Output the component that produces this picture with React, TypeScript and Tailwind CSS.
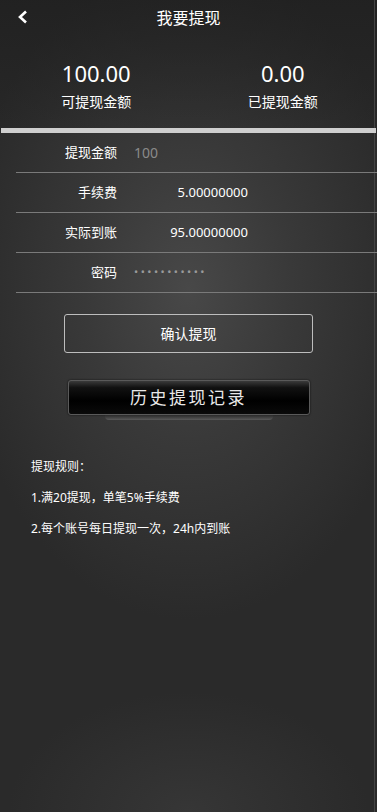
import React from "react";

export default function App() {
  const font = { fontFamily: '"Noto Sans", "Noto Sans CJK SC", sans-serif' };
  return (
    <div
      className="relative w-[377px] h-[812px] overflow-hidden text-white bg-[#2a2a2a]"
      style={font}
    >
      <div className="absolute inset-0 bg-[radial-gradient(ellipse_230px_330px_at_50%_290px,#484848_0%,#393939_45%,rgba(42,42,42,0)_100%)]" />
      <div className="absolute inset-x-0 top-0 h-[130px] bg-[linear-gradient(to_bottom,rgba(30,30,30,0.7),rgba(30,30,30,0.2))]" />
      <div className="absolute inset-x-0 bottom-0 h-[200px] bg-[radial-gradient(ellipse_180px_120px_at_50%_100%,#363636_0%,rgba(42,42,42,0)_100%)]" />
      <div className="absolute top-0 bottom-0 right-[2px] w-px bg-[#444]" />
      <div className="relative flex flex-col">
        {/* header */}
        <div className="relative h-[35px] flex items-center justify-center">
          <svg
            className="absolute left-[17px] top-[10px]"
            width="12"
            height="14"
            viewBox="0 0 12 14"
          >
            <path d="M9 1.5 L3 7 L9 12.5" stroke="#fff" strokeWidth="2.6" fill="none" />
          </svg>
          <span className="text-[16px] leading-none">我要提现</span>
        </div>
        {/* balances */}
        <div className="flex pt-[23px] h-[93px]">
          <div className="flex-1 flex flex-col items-center translate-x-[2px]">
            <span className="text-[22px] leading-[30px]">100.00</span>
            <span className="text-[14px] leading-[20px] mt-[4px]">可提现金额</span>
          </div>
          <div className="flex-1 flex flex-col items-center">
            <span className="text-[22px] leading-[30px]">0.00</span>
            <span className="text-[14px] leading-[20px] mt-[4px]">已提现金额</span>
          </div>
        </div>
        <div className="h-[5px] mx-[1px] bg-[#cfcfcf]" />
        {/* form */}
        <div className="flex flex-col pl-[16px]">
          {[
            { label: "提现金额", value: "100", kind: "placeholder" },
            { label: "手续费", value: "5.00000000", kind: "num" },
            { label: "实际到账", value: "95.00000000", kind: "num" },
            { label: "密码", value: "•••••••••••", kind: "pwd" },
          ].map((r) => (
            <div
              key={r.label}
              className="h-[40px] flex items-center border-b border-[#7a7a7a]"
            >
              <span className="w-[101px] text-right text-[13px]">{r.label}</span>
              {r.kind === "placeholder" && (
                <span className="ml-[17px] text-[14px] text-[#8a8a8a]">{r.value}</span>
              )}
              {r.kind === "num" && (
                <span className="w-[131px] text-right text-[13px]">{r.value}</span>
              )}
              {r.kind === "pwd" && (
                <span className="ml-[17px] text-[11px] tracking-[2.5px] text-[#9a9a9a]">
                  {r.value}
                </span>
              )}
            </div>
          ))}
        </div>
        {/* confirm */}
        <div className="flex justify-center mt-[21px]">
          <div className="w-[249px] h-[39px] rounded-[3px] border border-[#bdbdbd] flex items-center justify-center text-[14px]">
            确认提现
          </div>
        </div>
        {/* history */}
        <div className="flex flex-col items-center mt-[27px]">
          <div className="w-[242px] h-[35px] rounded-[3px] border border-[#5a5a5a] bg-[linear-gradient(to_bottom,#3a3a3a_0%,#111_20%,#000_60%,#0a0a0a_100%)] shadow-[0_0_2px_rgba(0,0,0,0.8)] flex items-center justify-center text-[17px] tracking-[2.5px] text-[#e8e8e8]">
            历史提现记录
          </div>
          <div className="w-[168px] h-[5px] rounded-b-[4px] bg-[linear-gradient(to_bottom,#2a2a2a,#5a5a5a)]" />
        </div>
        {/* rules */}
        <div className="flex flex-col pl-[31px] mt-[39px] text-[12px] leading-[16px] gap-[15px]">
          <span>提现规则：</span>
          <span>1.满20提现，单笔5%手续费</span>
          <span>2.每个账号每日提现一次，24h内到账</span>
        </div>
      </div>
    </div>
  );
}
